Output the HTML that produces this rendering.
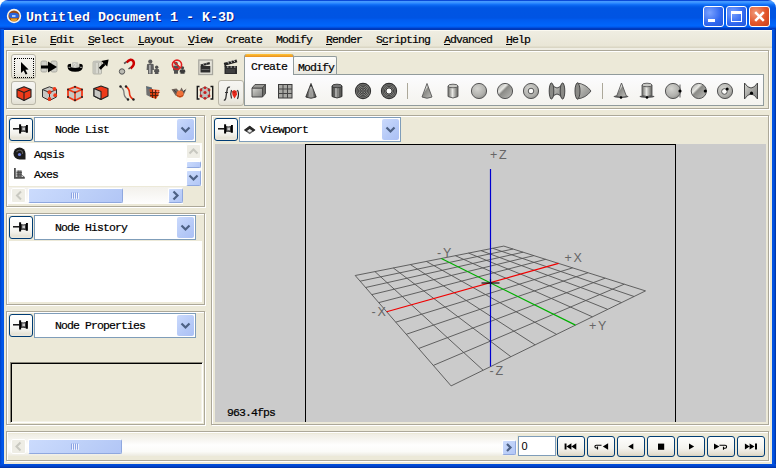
<!DOCTYPE html>
<html><head><meta charset="utf-8">
<style>
*{box-sizing:border-box;margin:0;padding:0}
html,body{width:776px;height:468px;overflow:hidden;background:#fff;position:relative;font-family:"Liberation Mono",monospace}
.a{position:absolute}
#title{left:0;top:0;width:776px;height:30px;border-radius:8px 8px 0 0;background:linear-gradient(to bottom,#0a4ad8 0,#0a4ad8 1px,#4a9cff 1px,#3590ff 3px,#1878fc 4px,#0560ec 6px,#0055e3 8px,#0054e3 18px,#005cf0 20px,#0066fc 26px,#0050e0 27.5px,#003cc0 28.5px,#0036b0 30px)}
#ttxt{left:26px;top:9px;font:bold 13.33px/18px "Liberation Mono",monospace;color:#fff;text-shadow:1px 1px 0 #0a1883;white-space:pre;letter-spacing:0}
.fl{left:0;top:29px;width:4px;height:439px;background:linear-gradient(to right,#0041c4,#0058ee 50%,#0054e3)}
.fr{left:772px;top:29px;width:4px;height:439px;background:linear-gradient(to right,#0054e3,#0050e0 50%,#00309a)}
.fb{left:0;top:464px;width:776px;height:4px;background:linear-gradient(to bottom,#0050e0,#0046cf 50%,#0030a0)}
.tb{top:6px;width:21px;height:21px;border:1px solid #fff;border-radius:3px}
.menu{top:30px;left:4px;width:768px;height:20px;background:linear-gradient(#fbf9f0 0,#fbf9f0 1px,#efede2 1px,#e9e6d6 16px,#dad6c4 17px,#dad6c4 18px,#efede3 18px,#efede3 20px)}
.mi{top:33px;font:11.5px/14px "Liberation Mono",monospace;letter-spacing:-0.9px;color:#000;white-space:pre;-webkit-text-stroke:.2px #000}
.mi u{text-decoration:none;position:relative}.mi u:after{content:"";position:absolute;left:0;width:6px;top:11px;height:1px;background:#000}

.etch{border:1px solid #aca899;box-shadow:inset 1px 1px 0 #fff,1px 1px 0 #fff}
.tbtn{width:25px;height:25px;border:1px solid #b9b6a8;border-radius:3px;background:linear-gradient(#f6f5f2,#eeede6 70%,#e2dfd2)}
.pin{width:24px;height:23px;border:1px solid #003c74;border-radius:3px;background:linear-gradient(#fff 0%,#fafaf7 50%,#f0efe8 75%,#e6e3d6 90%,#ece9e0 100%)}
.combo{height:25px;border:1px solid #7f9db9;background:#fff}
.dd{width:17px;height:21px;border-radius:2px;background:linear-gradient(135deg,#cbdafc,#b5c9f7 60%,#abc0f5)}
.ctxt{font:11.5px/14px "Liberation Mono",monospace;letter-spacing:-0.9px;color:#000;white-space:pre;-webkit-text-stroke:.2px #000}
.sbb{border-radius:2px;background:linear-gradient(135deg,#cbdbfd,#bccff8 60%,#b2c6f6);border:1px solid;border-color:#fff #8fa8df #8fa8df #fff}
.sbd{border-radius:2px;background:#eeede5;border:1px solid #fff}
.pbtn{width:28px;height:21px;border:1px solid #003c74;border-radius:3px;background:linear-gradient(#fefefd 0%,#f4f3ee 60%,#e3dfd0 90%,#d6d0bd 100%)}
</style></head><body>
<div class="a" style="left:0;top:20px;width:776px;height:448px;background:#ece9d8"></div>
<div id="title" class="a"></div>
<svg class="a" style="left:6px;top:8px" width="16" height="16"><circle cx="8" cy="8" r="7.2" fill="#fbf6ea"/><circle cx="8" cy="8" r="5.6" fill="#9a4a14"/><path d="M3 5.5Q8 4 12.5 6L13 9.5Q8 11 3.5 9.5z" fill="#2a64dc"/><path d="M6 7h3.5v2h-3.5z" fill="#a8c8ff"/><path d="M4.5 10.5h7l-1 2.5h-5z" fill="#e6a02a"/></svg>
<div id="ttxt" class="a">Untitled Document 1 - K-3D</div>
<div class="a fl"></div><div class="a fr"></div><div class="a fb"></div>
<div class="a tb" style="left:703px;background:radial-gradient(circle at 30% 30%,#7aa2ff,#3067ef 60%,#2458d9)"><div class="a" style="left:4px;top:12px;width:7px;height:3px;background:#fff"></div></div>
<div class="a tb" style="left:726px;background:radial-gradient(circle at 30% 30%,#7aa2ff,#3067ef 60%,#2458d9)"><div class="a" style="left:4px;top:4px;width:11px;height:11px;border:1px solid #fff;border-top-width:3px"></div></div>
<div class="a tb" style="left:749px;background:radial-gradient(circle at 30% 30%,#f09b7a,#e2552b 55%,#c8401b)">
<svg class="a" style="left:0;top:0" width="19" height="19"><path d="M5.2 5.2L13.8 13.8M13.8 5.2L5.2 13.8" stroke="#fff" stroke-width="2.5"/></svg></div>
<div class="a menu"></div>
<div class="a mi" style="left:12px"><u>F</u>ile</div>
<div class="a mi" style="left:50px"><u>E</u>dit</div>
<div class="a mi" style="left:88px"><u>S</u>elect</div>
<div class="a mi" style="left:138px"><u>L</u>ayout</div>
<div class="a mi" style="left:188px"><u>V</u>iew</div>
<div class="a mi" style="left:226px">Create</div>
<div class="a mi" style="left:276px">Modify</div>
<div class="a mi" style="left:326px"><u>R</u>ender</div>
<div class="a mi" style="left:376px">S<u>c</u>ripting</div>
<div class="a mi" style="left:444px"><u>A</u>dvanced</div>
<div class="a mi" style="left:506px"><u>H</u>elp</div>

<!-- toolbar -->
<div class="a etch" style="left:6px;top:50px;width:763px;height:59px"></div>
<div class="a tbtn" style="left:11px;top:54px"><div class="a" style="left:1.5px;top:2.5px;width:20px;height:20px;border:1px dotted #000"></div></div>
<div class="a tbtn" style="left:11px;top:81px;height:24px"></div>
<div class="a tbtn" style="left:218px;top:80px;width:26px;height:26px"></div>
<!-- tab -->
<div class="a" style="left:244px;top:74px;width:520px;height:32px;border:1px solid #919b9c;background:linear-gradient(#fcfcfe,#f4f3ee)"></div>
<div class="a" style="left:293px;top:56px;width:44px;height:18px;border:1px solid #919b9c;border-bottom:none;border-radius:2px 2px 0 0;background:linear-gradient(#fdfdfb,#f3f2ec 60%,#e9e8e0)"></div>
<div class="a" style="left:244px;top:54px;width:50px;height:21px;border:1px solid #919b9c;border-bottom:none;border-top:none;border-radius:3px 3px 0 0;background:linear-gradient(#ffc73a 0,#f5a829 1.5px,#e68f1e 3px,#fcfcfe 3px)"></div>
<div class="a ctxt" style="left:251px;top:60px">Create</div>
<div class="a ctxt" style="left:298px;top:61px">Modify</div>
<div class="a" style="left:407px;top:83px;width:1px;height:16px;background:#aca899"></div>
<div class="a" style="left:602px;top:83px;width:1px;height:16px;background:#aca899"></div>

<svg class="a" style="left:0;top:0" width="776" height="110" viewBox="0 0 776 110">
<defs>
<linearGradient id="gh" x1="0" x2="1" y1="0" y2="0"><stop offset="0" stop-color="#6a6a66"/><stop offset=".45" stop-color="#e6e6e2"/><stop offset="1" stop-color="#5c5c58"/></linearGradient>
<linearGradient id="gd" x1="0" x2="1" y1="0" y2="1"><stop offset="0" stop-color="#d8d8d4"/><stop offset=".5" stop-color="#a8a8a4"/><stop offset="1" stop-color="#808080"/></linearGradient>
<radialGradient id="gs" cx=".4" cy=".35" r=".7"><stop offset="0" stop-color="#d4d4d0"/><stop offset=".7" stop-color="#b0b0ac"/><stop offset="1" stop-color="#8c8c88"/></radialGradient>
<linearGradient id="gs2" x1="0" x2="1" y1="0" y2="1"><stop offset="0" stop-color="#9a9a96"/><stop offset=".35" stop-color="#e8e8e4"/><stop offset=".45" stop-color="#8a8a86"/><stop offset="1" stop-color="#c0c0bc"/></linearGradient>
<linearGradient id="gdk" x1="0" x2="1" y1="0" y2="0"><stop offset="0" stop-color="#3c3c3a"/><stop offset=".5" stop-color="#a4a4a0"/><stop offset="1" stop-color="#3c3c3a"/></linearGradient>
</defs>
<!-- row1 -->
<path d="M21 62L21 73L23.6 70.6L25.6 74.6L27.4 73.8L25.4 69.8L28.6 69.6Z" fill="#000"/>
<g>
<rect x="41" y="61" width="6" height="11" rx="1.5" fill="#d0d0c8" stroke="#a0a098" stroke-width=".8"/>
<rect x="51" y="61" width="6" height="11" rx="1.5" fill="#d0d0c8" stroke="#a0a098" stroke-width=".8"/>
<rect x="41" y="65.5" width="9" height="3" fill="#000"/>
<path d="M48 61.5L57 67L48 72.5Z" fill="#000"/>
</g>
<g>
<path d="M71 68L72.2 62.3Q75 61.6 78 62.3L79.4 68Z" fill="#c4c4bc"/>
<path d="M73 64.5l1.8-1.2 1.6 1.8M74 66.5l2-.8" stroke="#e8e8e2" stroke-width=".8" fill="none"/>
<path d="M67.5 66.2Q67.6 63.8 71 63.8L71 67.2Q75 68.6 79.4 67.2L79.4 63.8Q82.8 63.8 82.8 66.2Q82.8 71.8 75.2 71.8Q67.5 71.8 67.5 66.2Z" fill="#000"/>
<path d="M68.5 67.3h2M80 67.3h2" stroke="#d8d8d0" stroke-width=".8"/>
</g>
<g>
<rect x="93" y="61.5" width="8.5" height="12.5" rx="1" fill="#d8d8d0" stroke="#a8a8a0" stroke-width=".8"/>
<ellipse cx="97.2" cy="61.8" rx="4.2" ry="1.3" fill="#c0c0b8"/>
<path d="M95 63v10.5M98.5 63v10.5" stroke="#aaa9a0" stroke-width=".8"/>
<path d="M99.8 68.8L104.5 64" stroke="#000" stroke-width="2.8"/>
<path d="M101.2 61L108.6 59.4L107.2 66.6Z" fill="#000"/>
</g>
<g>
<path d="M126.5 62.5Q131 57.5 133.5 61.5Q135 65 130.5 68.5" fill="none" stroke="#c00" stroke-width="2.6"/>
<path d="M124 63.5l2.5 -1.5M128.5 69l2-1.5" stroke="#555" stroke-width="1.5"/>
<circle cx="122" cy="71.5" r="2.7" fill="#bcbcb4" stroke="#555" stroke-width="1"/>
</g>
<g>
<circle cx="150.3" cy="61.6" r="2.1" fill="#5a5a5a"/>
<path d="M147 64.2Q150.3 63 153.6 64.2L154 70H152.6V74H148V70H146.6Z" fill="#606060"/>
<path d="M149 65h1.8v8.5H149z" fill="#a8a8a8"/>
<circle cx="156.7" cy="67.3" r="1.7" fill="#505050"/>
<path d="M154.3 69.3Q156.7 68.5 159 69.3L159.3 72H158.5V74H154.8V72H154Z" fill="#555"/>
</g>
<g>
<circle cx="176" cy="63.5" r="1.8" fill="#555"/>
<path d="M173.3 65.8Q176 65 178.7 65.8L179 70.5H178V73.8H174V70.5H173Z" fill="#505050"/>
<circle cx="182.5" cy="67.8" r="1.6" fill="#444"/>
<path d="M180 69.7Q182.5 69 185 69.7L185.4 72.2H184.6V73.8H180.4V72.2H179.6Z" fill="#3a3a3a"/>
<circle cx="177" cy="64.7" r="4.6" fill="none" stroke="#e02020" stroke-width="1.6"/>
<path d="M173.8 61.6L180.2 67.8" stroke="#e02020" stroke-width="1.6"/>
</g>
<g>
<rect x="198.8" y="60" width="13.7" height="14.5" fill="#e6e4da" stroke="#a8a79e" stroke-width="1.3"/>
<path d="M200.5 66h9.8v6.5h-9.8z" fill="#2e2e2e"/>
<path d="M200.5 64.5L209.5 62L210 64.2L201 66.5Z" fill="#262626"/>
<path d="M203 64l1 1.5M206 63.2l1 1.5" stroke="#bbb" stroke-width=".8"/>
<path d="M201.5 69.5h8" stroke="#777" stroke-width=".8"/>
</g>
<g>
<path d="M224.5 66h12.5v8h-12.5z" fill="#2c2c2c"/>
<path d="M224.5 62.8L236.5 59.5L237.3 62.2L225.5 65.5Z" fill="#222"/>
<path d="M224.5 62.8L225.5 66.5" stroke="#222" stroke-width="1.5"/>
<path d="M227.5 61.5l1.2 2M230.5 60.7l1.2 2M233.5 59.9l1.2 2" stroke="#d8d8d8" stroke-width="1"/>
<path d="M227 67h1.5M230.5 67h1.5M234 67h1.5" stroke="#ccc" stroke-width="1"/>
<path d="M226 70h9M226 72h9" stroke="#666" stroke-width=".7"/>
</g>
<!-- row2 -->
<g stroke="#222" stroke-width="1.1" stroke-linejoin="round">
<path d="M17 89.5L24 86.8L31 89.5L31 97L24 100.5L17 97Z" fill="#ee3a1a"/>
<path d="M17 89.5L24 92.5L31 89.5M24 92.5V100.5" fill="none"/>
</g>
<g stroke="#333" stroke-width="1" stroke-linejoin="round">
<path d="M42.5 89.5L49.5 86.8L56.5 89.5L56.5 97L49.5 100.5L42.5 97Z" fill="#c8c8c4"/>
<path d="M42.5 89.5L49.5 92.5L56.5 89.5M49.5 92.5V100.5" fill="none"/>
</g>
<g fill="#f03818"><circle cx="49.5" cy="92.3" r="2"/><circle cx="54.5" cy="88.8" r="1.9"/><circle cx="55.2" cy="95.2" r="1.9"/><circle cx="49.5" cy="99" r="1.9"/></g>
<g stroke-linejoin="round">
<path d="M68 89.5L75 86.8L82 89.5L82 97L75 100.5L68 97Z" fill="#c8c8c4" stroke="#f03818" stroke-width="1.8"/>
<path d="M68 89.5L75 92.5L82 89.5M75 92.5V100.5" fill="none" stroke="#f03818" stroke-width="1.6"/>
<g fill="#222"><circle cx="68" cy="89.5" r="1"/><circle cx="82" cy="89.5" r="1"/><circle cx="75" cy="86.8" r="1"/><circle cx="68" cy="97" r="1"/><circle cx="82" cy="97" r="1"/><circle cx="75" cy="100.3" r="1"/><circle cx="75" cy="92.5" r="1"/></g>
</g>
<g stroke="#222" stroke-width="1.1" stroke-linejoin="round">
<path d="M94 88.5L101 86L108 88.5L108 96L101 99.5L94 96Z" fill="#ee3a1a"/>
<path d="M94 88.5L101 91.5V99.5L94 96Z" fill="#c8c8c4"/>
</g>
<g fill="none" stroke-width="1.3">
<path d="M120.5 86.5Q124 89 124 93Q124 97 128 99.5" stroke="#777"/>
<path d="M126 86.5Q129.5 89 129.5 93Q129.5 97 133.5 99.5" stroke="#e83010" stroke-width="1.6"/>
</g>
<g fill="#222"><circle cx="120.5" cy="86.5" r="1.2"/><circle cx="128" cy="99.5" r="1.2"/><circle cx="126" cy="86.5" r="1.2"/><circle cx="133.5" cy="99.5" r="1.2"/></g>
<g>
<path d="M146 86L152 87.5L151.5 97.5L146.5 95Z" fill="#707070"/>
<path d="M147 87.5l4 1v4" stroke="#4a6a80" stroke-width="1" fill="none"/>
<path d="M149.5 89L159.5 90L158.5 95L156 99L150.5 97Z" fill="#e04010"/>
<path d="M152.5 89.5v8.5M155.5 90v8.5M150 92.5h9.5M150 95.5h8.5" stroke="#4a2010" stroke-width=".9"/>
<circle cx="154" cy="91" r="1.1" fill="#ff8070"/><circle cx="157.5" cy="91.5" r="1.1" fill="#ff8070"/>
</g>
<g>
<path d="M171.5 89.2L176.5 88.5L179.5 91.5L181.5 87.5L183.5 91L186.5 88.5L183.5 95.5L180 97.5L175.5 95.5Z" fill="#6e625a"/>
<path d="M174 90l3.5 4M185 90l-3 4" stroke="#3a3a40" stroke-width="1"/>
<circle cx="180" cy="94" r="3.6" fill="#f07038"/>
<path d="M177 95.5Q180 98 183 95.5" stroke="#b84010" stroke-width="1" fill="none"/>
</g>
<g>
<path d="M199.5 86.5h-2.2v12.5h2.2M210.5 86.5h2.2v12.5h-2.2" fill="none" stroke="#1a1a1a" stroke-width="1.4"/>
<path d="M200.5 89L205 87L209.5 89L209.5 96.5L205 99L200.5 96.5Z" fill="#c0c0bc" stroke="#555" stroke-width=".8"/>
<g fill="#c82020"><circle cx="205" cy="87.8" r="1.4"/><circle cx="201" cy="90" r="1.4"/><circle cx="209" cy="90" r="1.4"/><circle cx="205" cy="92.5" r="1.6"/><circle cx="201" cy="96" r="1.4"/><circle cx="209" cy="96" r="1.4"/><circle cx="205" cy="98.3" r="1.4"/></g>
</g>
<g>
<path d="M230 87.2Q228 86.5 227.3 89Q226.5 93 226 97Q225.5 100.5 223.8 100" fill="none" stroke="#333" stroke-width="1.3"/>
<path d="M225 92.5h3" stroke="#333" stroke-width="1"/>
<path d="M231.5 90Q230 94 231.5 98.5M237.5 90Q239.5 94 237.5 99" fill="none" stroke="#222" stroke-width="1.1"/>
<path d="M232 91.5L234 90L236.5 91L237 94.5L234.5 98.5L232.5 95Z" fill="#e8281a"/>
<path d="M232.5 91.5L234.5 92.5L236.5 91" fill="none" stroke="#8a1a10" stroke-width=".6"/>
</g>
<!-- tab icons -->
<g>
<path d="M252 88h10.5v9h-10.5z" fill="url(#gd)" stroke="#3a3a3a" stroke-width=".9"/>
<path d="M252 88L255 84.5H265.5L262.5 88Z" fill="#9a9a96" stroke="#444" stroke-width=".9"/>
<path d="M262.5 88L265.5 84.5V93.5L262.5 97Z" fill="#6a6a66" stroke="#444" stroke-width=".9"/>
</g>
<g>
<rect x="278.5" y="84.5" width="13.5" height="13.5" fill="#a8a8a4" stroke="#3a3a3a" stroke-width="1"/>
<path d="M283 84.5v13.5M287.5 84.5v13.5M278.5 89h13.5M278.5 93.5h13.5" stroke="#444" stroke-width="1"/>
</g>
<g>
<path d="M311 83.5L305.8 97Q311 99.5 316.2 97Z" fill="url(#gdk)" stroke="#333" stroke-width=".9"/>
<path d="M311 84L309 97.5M311 84L313 97.5" stroke="#bbb" stroke-width=".6"/>
<path d="M311 83.5l-1 3h2z" fill="#000"/>
</g>
<g>
<path d="M332 86v10.5Q337 99.5 342 96.5V86" fill="url(#gdk)" stroke="#333" stroke-width=".9"/>
<ellipse cx="337" cy="86" rx="5" ry="1.8" fill="#777" stroke="#333" stroke-width=".9"/>
<path d="M334.5 87.5v10M337 87.8v10.2M339.5 87.5v10" stroke="#555" stroke-width=".7"/>
<path d="M336 88v9" stroke="#ddd" stroke-width=".8"/>
</g>
<g fill="none" stroke="#2e2e2e">
<circle cx="363" cy="91" r="7.6" fill="#8e8e8a" stroke-width="1.1"/>
<circle cx="363" cy="91" r="6" stroke-width=".8"/>
<circle cx="363" cy="91" r="4.5" stroke-width=".8"/>
<circle cx="363" cy="91" r="3" stroke-width=".8"/>
<circle cx="363" cy="91" r="1.4" stroke-width=".8"/>
<path d="M363 83.5v15M355.5 91h15" stroke="#555" stroke-width=".5"/>
</g>
<g fill="none" stroke="#2e2e2e">
<circle cx="389" cy="91" r="7.6" fill="#8e8e8a" stroke-width="1.1"/>
<circle cx="389" cy="91" r="6.1" stroke-width=".8"/>
<circle cx="389" cy="91" r="4.6" stroke-width=".8"/>
<path d="M389 83.5v15M381.5 91h15" stroke="#555" stroke-width=".5"/>
<circle cx="389" cy="91" r="3.1" fill="#fcfcfa" stroke-width="1"/>
</g>
<g>
<path d="M427 83.5L422 97Q427 99.5 432 97Z" fill="url(#gs2)" stroke="#555" stroke-width=".9"/>
</g>
<g>
<path d="M448 86v10.5Q453 99.5 458 96.5V86" fill="url(#gh)" stroke="#555" stroke-width=".9"/>
<ellipse cx="453" cy="86" rx="5" ry="1.8" fill="#c8c8c4" stroke="#555" stroke-width=".9"/>
</g>
<circle cx="479" cy="91" r="7.6" fill="url(#gs)" stroke="#555" stroke-width="1"/>
<circle cx="505" cy="91" r="7.6" fill="url(#gs2)" stroke="#555" stroke-width="1"/>
<g>
<circle cx="531" cy="91" r="7.6" fill="url(#gs)" stroke="#555" stroke-width="1"/>
<circle cx="531" cy="91" r="2.8" fill="#fcfcfa" stroke="#555" stroke-width="1"/>
</g>
<g>
<path d="M551 83Q557 93 563 83V99Q557 89 551 99Z" fill="url(#gd)" stroke="#444" stroke-width="1"/>
<ellipse cx="551.5" cy="91" rx="2.3" ry="8" fill="#8a8a86" stroke="#444" stroke-width="1"/>
<ellipse cx="562.5" cy="91" rx="2.3" ry="8" fill="#8a8a86" stroke="#444" stroke-width="1"/>
</g>
<g>
<path d="M577 83Q586 84 591 91Q586 98 577 99Z" fill="url(#gd)" stroke="#555" stroke-width="1"/>
<ellipse cx="577.5" cy="91" rx="2.5" ry="8" fill="#8a8a86" stroke="#444" stroke-width="1"/>
</g>
<g>
<ellipse cx="621" cy="96.5" rx="7.5" ry="1.5" fill="#555"/>
<path d="M621.5 83L616.5 96.5Q621.5 98 626.5 96.5Z" fill="url(#gs2)" stroke="#555" stroke-width=".9"/>
<circle cx="621" cy="97.5" r="1.3" fill="#000"/>
</g>
<g>
<ellipse cx="647" cy="96.5" rx="7.5" ry="1.5" fill="#555"/>
<path d="M642 85v10.5Q647 97.5 652 95.5V85" fill="url(#gh)" stroke="#555" stroke-width=".9"/>
<ellipse cx="647" cy="85" rx="5" ry="1.8" fill="#c8c8c4" stroke="#555" stroke-width=".9"/>
<circle cx="647" cy="97.5" r="1.3" fill="#000"/>
</g>
<g>
<circle cx="673" cy="91" r="7.6" fill="url(#gs)" stroke="#555" stroke-width="1"/>
<path d="M680 84.5v13" stroke="#777" stroke-width="1.2"/>
<circle cx="680" cy="91" r="1.6" fill="#000"/>
</g>
<g>
<circle cx="698.8" cy="91" r="7.6" fill="url(#gs2)" stroke="#555" stroke-width="1"/>
<circle cx="705.3" cy="91" r="1.6" fill="#000"/>
</g>
<g>
<circle cx="725" cy="91" r="7.6" fill="url(#gs)" stroke="#555" stroke-width="1"/>
<circle cx="724.4" cy="91.5" r="2.8" fill="#fcfcfa" stroke="#555" stroke-width="1"/>
<circle cx="727.2" cy="89" r="1.5" fill="#000"/>
</g>
<g>
<path d="M744.5 83Q751 93 757.5 83V99Q751 89 744.5 99Z" fill="url(#gd)" stroke="#444" stroke-width="1"/>
<circle cx="751.5" cy="93.2" r="1.6" fill="#000"/>
</g>
</svg>

<!-- panel 1 -->
<div class="a etch" style="left:6px;top:115px;width:199px;height:92px"></div>
<div class="a" style="left:8px;top:142px;width:195px;height:45px;background:#ece9d8"></div><div class="a" style="left:9px;top:143px;width:177px;height:43px;background:#fff"></div>
<div class="a pin" style="left:9px;top:118px"></div>
<div class="a combo" style="left:34px;top:117px;width:162px"><div class="a dd" style="left:142px;top:1px"></div></div>
<div class="a ctxt" style="left:55px;top:123px">Node List</div>
<div class="a ctxt" style="left:34px;top:148px">Aqsis</div>
<div class="a ctxt" style="left:34px;top:168px">Axes</div>
<div class="a" style="left:186px;top:143px;width:16px;height:43px;background:#fdfdfa"></div>
<div class="a sbd" style="left:186px;top:144px;width:15px;height:15px"></div>
<div class="a sbb" style="left:186px;top:161px;width:15px;height:7px"></div>
<div class="a sbb" style="left:186px;top:170px;width:15px;height:16px"></div>
<div class="a" style="left:8px;top:187px;width:175px;height:17px;background:linear-gradient(#f3f1ec,#fefefe)"></div>
<div class="a sbd" style="left:11px;top:188px;width:15px;height:15px"></div>
<div class="a sbb" style="left:28px;top:188px;width:95px;height:15px"></div>
<div class="a sbb" style="left:168px;top:188px;width:15px;height:15px"></div>

<!-- panel 2 -->
<div class="a etch" style="left:6px;top:213px;width:199px;height:92px"></div>
<div class="a" style="left:8px;top:240px;width:194px;height:62px;background:#ece9d8"></div><div class="a" style="left:9px;top:241px;width:193px;height:61px;background:#fff"></div>
<div class="a pin" style="left:9px;top:216px"></div>
<div class="a combo" style="left:34px;top:215px;width:162px"><div class="a dd" style="left:142px;top:1px"></div></div>
<div class="a ctxt" style="left:55px;top:221px">Node History</div>

<!-- panel 3 -->
<div class="a etch" style="left:6px;top:311px;width:199px;height:114px"></div>
<div class="a pin" style="left:9px;top:314px"></div>
<div class="a combo" style="left:34px;top:313px;width:162px"><div class="a dd" style="left:142px;top:1px"></div></div>
<div class="a ctxt" style="left:55px;top:319px">Node Properties</div>
<div class="a" style="left:10px;top:362px;width:193px;height:61px;border-top:1px solid #8a877a;border-left:1px solid #8a877a;border-right:1px solid #fff;border-bottom:1px solid #fff;box-shadow:inset 1px 1px 0 #000,inset -1px -1px 0 #f4f2e8"></div>

<!-- viewport panel -->
<div class="a etch" style="left:211px;top:115px;width:558px;height:310px"></div>
<div class="a" style="left:215px;top:144px;width:551px;height:278px;background:#cbcbcb"></div>
<div class="a pin" style="left:214px;top:118px"></div>
<div class="a combo" style="left:239px;top:117px;width:162px"><div class="a dd" style="left:142px;top:1px"></div></div>
<div class="a ctxt" style="left:260px;top:123px">Viewport</div>
<div class="a" style="left:305px;top:144px;width:371px;height:278px;border:1px solid #000;border-bottom:none;border-width:1px 1px 0 1px"></div>
<svg class="a" style="left:0;top:0" width="776" height="468">
<path d="M355.20 275.50L451.10 385.90 M355.20 275.50L503.80 246.10 M374.94 271.59L483.14 370.24 M360.13 281.18L513.05 249.03 M393.30 267.96L510.88 356.69 M365.63 287.51L523.05 252.19 M410.40 264.58L535.12 344.84 M371.79 294.60L533.88 255.61 M426.38 261.42L556.50 334.39 M378.75 302.61L545.66 259.33 M455.37 255.68L592.45 316.83 M395.74 322.17L572.58 267.85 M468.57 253.07L607.71 309.37 M406.27 334.29L588.07 272.74 M480.99 250.61L621.51 302.62 M418.62 348.51L605.19 278.16 M492.72 248.29L634.06 296.49 M433.32 365.43L624.22 284.17 M503.80 246.10L645.50 290.90 M451.10 385.90L645.50 290.90" stroke="#545454" stroke-width="0.9" fill="none"/>
<path d="M386.66 311.72L558.51 263.40" stroke="#f00000" stroke-width="1.2" fill="none"/>
<path d="M441.34 258.46L575.48 325.12" stroke="#00b000" stroke-width="1.2" fill="none"/>
<path d="M490.5 169V366.5" stroke="#0000d0" stroke-width="1.2"/>
<path d="M481.5 283H499.5" stroke="#000" stroke-width="1.1"/><path d="M490.5 279V287" stroke="#000080" stroke-width="1.2"/>
<g font-family="Liberation Sans" font-size="12.5" fill="#666" letter-spacing="1.8">
<text x="490" y="158.5">+Z</text>
<text x="489.5" y="374.5">-Z</text>
<text x="564.5" y="261.5">+X</text>
<text x="371.5" y="315.5">-X</text>
<text x="437" y="256.5">-Y</text>
<text x="589" y="330">+Y</text>
</g>
</svg>
<div class="a ctxt" style="left:227px;top:406px">963.4fps</div>

<!-- bottom bar -->
<div class="a etch" style="left:6px;top:431px;width:763px;height:30px"></div>
<div class="a" style="left:8px;top:434px;width:509px;height:22px;background:linear-gradient(#efede3,#f6f5f0 25%,#fefefe 50%,#fbfbf8 80%,#eceadf)"></div>
<div class="a sbd" style="left:11px;top:439px;width:15px;height:15px"></div>
<div class="a sbb" style="left:28px;top:439px;width:94px;height:15px"></div>
<div class="a sbb" style="left:502px;top:440px;width:14px;height:15px"></div>
<div class="a" style="left:518px;top:436px;width:38px;height:20px;border:1px solid #7f9db9;background:#fff;font:11px/19px 'Liberation Sans',sans-serif;padding-left:2.5px">0</div>
<div class="a pbtn" style="left:557px;top:436px"></div>
<div class="a pbtn" style="left:587px;top:436px"></div>
<div class="a pbtn" style="left:617px;top:436px"></div>
<div class="a pbtn" style="left:647px;top:436px"></div>
<div class="a pbtn" style="left:677px;top:436px"></div>
<div class="a pbtn" style="left:707px;top:436px"></div>
<div class="a pbtn" style="left:737px;top:436px"></div>
<svg class="a" style="left:0;top:0" width="776" height="468">
<defs>
<g id="pinic">
<path d="M4.5 11.3h6.5" stroke="#000" stroke-width="1.4"/>
<path d="M10.6 6.8h2v9.2h-2z" fill="#000"/>
<path d="M12.5 8.6Q15 9.6 17.8 8.3V15Q15 13.8 12.5 14.6z" fill="#333"/>
<path d="M13.8 9.8Q15.2 10.3 16.5 9.8V13Q15.2 12.6 13.8 13z" fill="#c8c8c8"/>
<path d="M17.5 7.4h1.9v7.8h-1.9z" fill="#000"/>
</g>
<path id="chev" d="M-4 -2L0 2L4 -2" fill="none" stroke="#4d6185" stroke-width="2.2"/>
</defs>
<use href="#pinic" x="8.5" y="117.5"/>
<use href="#pinic" x="8.5" y="215.5"/>
<use href="#pinic" x="8.5" y="313.5"/>
<use href="#pinic" x="213.5" y="117.5"/>
<use href="#chev" x="185.5" y="129.5"/>
<use href="#chev" x="185.5" y="227.5"/>
<use href="#chev" x="185.5" y="325.5"/>
<use href="#chev" x="390.5" y="129.5"/>
<use href="#chev" x="193.5" y="177.5"/>
<path d="M189.5 153.5L193.5 149.5L197.5 153.5" fill="none" stroke="#c8c8c0" stroke-width="2"/>
<path d="M173.5 191.5L177.5 195.5L173.5 199.5" fill="none" stroke="#4d6185" stroke-width="2.2"/>
<path d="M21 191.5L17 195.5L21 199.5" fill="none" stroke="#c8c8c0" stroke-width="2"/>
<path d="M20.5 442.5L16.5 446.5L20.5 450.5" fill="none" stroke="#c8c8c0" stroke-width="2"/>
<path d="M507 444L510.5 447.5L507 451" fill="none" stroke="#4d6185" stroke-width="2.2"/>
<g stroke-width="1">
<path d="M71.5 192.5v6M73.5 192.5v6M75.5 192.5v6M77.5 192.5v6" stroke="#8ca4e4"/>
<path d="M72.5 193v6M74.5 193v6M76.5 193v6M78.5 193v6" stroke="#eef2fe"/>
<path d="M71.5 443.5v6M73.5 443.5v6M75.5 443.5v6M77.5 443.5v6" stroke="#8ca4e4"/>
<path d="M72.5 444v6M74.5 444v6M76.5 444v6M78.5 444v6" stroke="#eef2fe"/>
</g>
<path d="M244 130L249.7 125.8L255.4 130L249.7 134.2Z" fill="#666"/>
<path d="M244 130L249.7 125.8L255.4 130L253 131.8L249.7 129.5L246.4 131.8Z" fill="#2a2a2a"/>
<path d="M247.2 130.8L249.7 129L252.2 130.8L249.7 132.6Z" fill="#e8e8e8"/>
<!-- list icons -->
<path d="M19.5 147.5a6 6 0 1 0 0 12h6v-6a6 6 0 0 0 -6 -6z" fill="#1c1c1c"/>
<path d="M16.5 152Q18 149.5 21 150.5Q23 151.5 22.5 154" fill="none" stroke="#5a5a5a" stroke-width="1.1"/>
<circle cx="19.5" cy="154.5" r="1.6" fill="#7080e0"/>
<g>
<path d="M14 168h1.8v9h9v1.8H14z" fill="#505050"/>
<path d="M16.5 170.5h5.5v6.5h-5.5z" fill="#8a8a8a"/>
<path d="M16.5 172.6h5.5M16.5 174.8h5.5M18.3 170.5v6.5M20.1 170.5v6.5" stroke="#444" stroke-width=".8"/>
<path d="M22 175.5l2.5 1.5" stroke="#666" stroke-width="1"/>
</g>
<!-- bottom player buttons -->
<g fill="#000">
<path d="M564.6 443.5h1.9v6h-1.9zM566.5 446.5l4.9-3.2v6.4zM571.4 446.5l4.9-3.2v6.4z"/>
<path d="M602.8 446.5l5.3-3.3v6.6z"/>
<path d="M601.5 445.2h-5.2a1.4 1.4 0 0 0 0 2.8h1.8M597.5 446.6v3" stroke="#000" stroke-width="1.1" fill="none"/>
<path d="M628.2 446.5l5.1-3.1v6.2z"/>
<path d="M658 443.6h6.2v6.2h-6.2z"/>
<path d="M689 443.5L694.2 446.5L689 449.5Z"/>
<path d="M714 443.4l5.4 3.1-5.4 3.1z"/>
<path d="M719.5 445.2h5.6a1.5 1.5 0 0 1 0 3h-2.2M723.5 446.8v3" stroke="#000" stroke-width="1.1" fill="none"/>
<path d="M744.9 443.4l4.8 3.1-4.8 3.1zM749.6 443.4l4.9 3.1-4.9 3.1zM755 443.4h2v6.2h-2z"/>
</g>
</svg>
</body></html>
